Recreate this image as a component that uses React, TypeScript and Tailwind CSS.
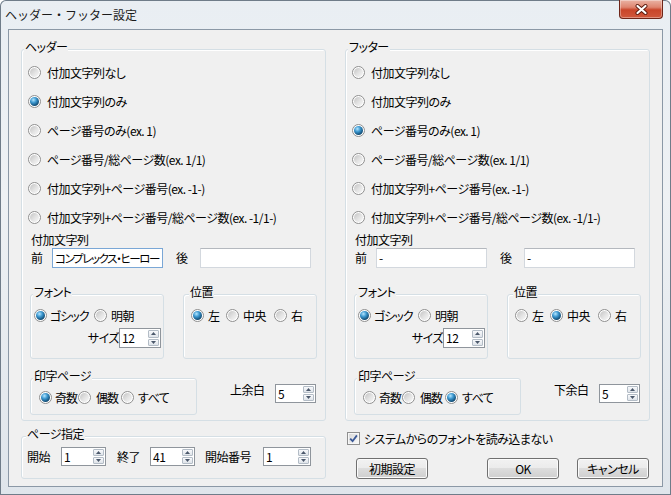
import type { ReactNode } from "react";

const OPTIONS = [
  "付加文字列なし",
  "付加文字列のみ",
  "ページ番号のみ(ex. 1)",
  "ページ番号/総ページ数(ex. 1/1)",
  "付加文字列+ページ番号(ex. -1-)",
  "付加文字列+ページ番号/総ページ数(ex. -1/1-)",
];

function Radio({ checked = false }: { checked?: boolean }) {
  return (
    <span className="flex h-[13px] w-[13px] shrink-0 items-center justify-center rounded-full border border-[#8f8f8f] bg-white">
      <span
        className={
          checked
            ? "h-[9px] w-[9px] rounded-full bg-[radial-gradient(circle_at_38%_32%,#b4e6ff_0%,#3b97cf_35%,#124c74_72%,#0a2c45_100%)]"
            : "h-[9px] w-[9px] rounded-full bg-[linear-gradient(135deg,#c4c4c4_0%,#e4e4e4_55%,#f8f8f8_100%)]"
        }
      />
    </span>
  );
}

function Group({
  label,
  labelClass,
  className,
  children,
}: {
  label: string;
  labelClass: string;
  className: string;
  children: ReactNode;
}) {
  return (
    <div className={"flex shrink-0 flex-col rounded-[3px] border border-[#d5dfe5] shadow-[inset_1px_1px_0_#ffffff] " + className}>
      <div className={"-mt-[10px] w-fit bg-[#f0f0f0] px-[1px] leading-[14px] " + labelClass}>{label}</div>
      {children}
    </div>
  );
}

function Arrow({ up }: { up?: boolean }) {
  return (
    <svg width="5" height="3" viewBox="0 0 5 3">
      <path d={up ? "M0 3 L2.5 0 L5 3 Z" : "M0 0 L5 0 L2.5 3 Z"} fill="#4b586b" />
    </svg>
  );
}

function Spin({ value, className }: { value: string; className: string }) {
  return (
    <div className={"flex shrink-0 border border-[#8f959c] bg-white " + className}>
      <span className="flex flex-1 items-center pl-[2px]">{value}</span>
      <span className="flex w-[12px] flex-col gap-[1px] py-[1px] pr-[1px]">
        <span className="flex flex-1 items-center justify-center rounded-[1px] border border-[#b3bcc6] bg-[linear-gradient(to_bottom,#f8f9fb,#dfe4ea)]">
          <Arrow up />
        </span>
        <span className="flex flex-1 items-center justify-center rounded-[1px] border border-[#b3bcc6] bg-[linear-gradient(to_bottom,#f8f9fb,#dfe4ea)]">
          <Arrow />
        </span>
      </span>
    </div>
  );
}

function TextBox({ value, focused, className }: { value: string; focused?: boolean; className: string }) {
  return (
    <div
      className={
        (focused
          ? "border-[#7aa7d6] text-[11.5px] tracking-[-1.4px] "
          : "border-[#d3d8de] border-t-[#b4b8be] ") +
        "flex h-[20px] w-[111px] shrink-0 items-center overflow-hidden border bg-white pl-[2px] " +
        className
      }
    >
      {value}
    </div>
  );
}

function Choice({ checked, label, className }: { checked?: boolean; label: string; className: string }) {
  return (
    <div className={"flex shrink-0 items-center " + className}>
      <Radio checked={checked} />
      <span className="shrink-0">{label}</span>
    </div>
  );
}

function Section({
  title,
  selected,
  before,
  after,
  beforeFocused,
  pos,
  print,
  marginLabel,
}: {
  title: string;
  selected: number;
  before: string;
  after: string;
  beforeFocused?: boolean;
  pos: number;
  print: number;
  marginLabel: string;
}) {
  return (
    <Group label={title} labelClass="ml-[2px]" className="h-[372px]">
      <div className="mt-[4px] flex flex-col pl-[6px]">
        {OPTIONS.map((o, i) => (
          <div key={o} className="flex h-[29px] items-center gap-[6px]">
            <Radio checked={i === selected} />
            <span>{o}</span>
          </div>
        ))}
      </div>
      <div className="mt-[1px] pl-[9px] leading-[14px]">付加文字列</div>
      <div className="mt-[1px] flex h-[20px] items-center pl-[9px]">
        <span className="w-[12px] shrink-0">前</span>
        <TextBox value={before} focused={beforeFocused} className="ml-[9px]" />
        <span className="ml-[13px] w-[12px] shrink-0">後</span>
        <TextBox value={after} className="ml-[12px]" />
      </div>
      <div className="mt-[26px] flex pl-[8px]">
        <Group label="フォント" labelClass="ml-[2px]" className="h-[65px] w-[134px]">
          <div className="mt-[10px] flex h-[13px] items-center pl-[3px]">
            <Choice checked label="ゴシック" className="w-[60px] gap-[3px] tracking-[-1px]" />
            <Choice label="明朝" className="gap-[4px]" />
          </div>
          <div className="mt-[6px] flex items-center justify-end pr-[2px]">
            <span>サイズ</span>
            <Spin value="12" className="h-[20px] w-[42px]" />
          </div>
        </Group>
        <Group label="位置" labelClass="ml-[5px]" className="ml-[19px] h-[65px] w-[134px]">
          <div className="mt-[10px] flex h-[13px] items-center pl-[7px]">
            <Choice checked={pos === 0} label="左" className="w-[35px] gap-[4px]" />
            <Choice checked={pos === 1} label="中央" className="w-[48px] gap-[4px]" />
            <Choice checked={pos === 2} label="右" className="gap-[4px]" />
          </div>
        </Group>
      </div>
      <div className="mt-[19px] flex pl-[8px]">
        <Group label="印字ページ" labelClass="ml-[2px]" className="h-[37px] w-[167px]">
          <div className="mt-[8px] flex h-[13px] items-center pl-[8px]">
            <Choice checked={print === 0} label="奇数" className="w-[39px] gap-[3px] tracking-[-1px]" />
            <Choice checked={print === 1} label="偶数" className="w-[43px] gap-[5px] tracking-[-1px]" />
            <Choice checked={print === 2} label="すべて" className="gap-[4px]" />
          </div>
        </Group>
        <div className="ml-[33px] mt-[6px] flex h-[19px] items-start">
          <span className="-mt-[1px] w-[36px] leading-[14px]">{marginLabel}</span>
          <Spin value="5" className="ml-[9px] h-[19px] w-[41px]" />
        </div>
      </div>
    </Group>
  );
}

function WinButton({ label, className }: { label: string; className: string }) {
  return (
    <button
      type="button"
      className={
        "flex h-[21px] w-[72px] shrink-0 items-center justify-center rounded-[3px] border border-[#707070] bg-[linear-gradient(to_bottom,#f2f2f2_0%,#ebebeb_49%,#dddddd_50%,#cfcfcf_100%)] shadow-[inset_0_0_0_1px_#fbfbfb] " +
        className
      }
    >
      {label}
    </button>
  );
}

export default function App() {
  return (
    <div className="flex h-[495px] w-[671px] flex-col overflow-hidden whitespace-nowrap rounded-t-[6px] bg-[linear-gradient(to_bottom,#e9eef3_0%,#eef1f4_40%,#dfe5eb_100%)] font-['Noto_Sans_CJK_JP',sans-serif] text-[12px] leading-[14px] text-black shadow-[inset_0_0_0_1px_#6f7c89]">
      {/* title bar */}
      <div className="flex h-[29px] shrink-0 items-start">
        <span className="ml-[5px] mt-[7px] leading-[16px] text-[#1b1b1b]">ヘッダー・フッター設定</span>
        <div className="ml-auto mr-[8px] flex h-[19px] w-[44px] items-center justify-center rounded-b-[4px] border border-t-0 border-[#6e2518] bg-[linear-gradient(to_bottom,#eab3a4_0%,#de8570_40%,#c9452a_55%,#d0583c_100%)] shadow-[inset_0_0_0_1px_rgba(255,255,255,0.35)]">
          <svg width="13" height="11" viewBox="0 0 13 11">
            <path d="M2.5 2 L10.5 9 M10.5 2 L2.5 9" stroke="#5a1a0e" strokeWidth="4" strokeLinecap="round" />
            <path d="M2.5 2 L10.5 9 M10.5 2 L2.5 9" stroke="#ffffff" strokeWidth="2.2" strokeLinecap="round" />
          </svg>
        </div>
      </div>

      {/* client area */}
      <div className="mx-[8px] flex h-[458px] shrink-0 border border-[#8b98a6] bg-[#f0f0f0] tracking-[-0.5px] [font-feature-settings:'palt']">
        <div className="ml-[12px] mt-[19px] flex w-[305px] shrink-0 flex-col">
          <Section
            title="ヘッダー"
            selected={1}
            before="コンプレックス・ヒーロー"
            after=""
            beforeFocused
            pos={0}
            print={0}
            marginLabel="上余白"
          />
          <Group label="ページ指定" labelClass="ml-[4px]" className="mt-[15px] h-[43px]">
            <div className="mt-[6px] flex h-[19px] items-center pl-[5px]">
              <span className="w-[24px] shrink-0">開始</span>
              <Spin value="1" className="ml-[10px] h-[19px] w-[45px]" />
              <span className="ml-[11px] w-[24px] shrink-0">終了</span>
              <Spin value="41" className="ml-[9px] h-[19px] w-[45px]" />
              <span className="ml-[10px] w-[48px] shrink-0">開始番号</span>
              <Spin value="1" className="ml-[10px] h-[19px] w-[48px]" />
            </div>
          </Group>
        </div>

        <div className="ml-[19px] mt-[19px] flex w-[305px] shrink-0 flex-col">
          <Section
            title="フッター"
            selected={2}
            before="-"
            after="-"
            pos={1}
            print={2}
            marginLabel="下余白"
          />
          <div className="mt-[11px] flex h-[13px] items-center gap-[4px] pl-[2px]">
            <span className="flex h-[13px] w-[13px] items-center justify-center border border-[#8f8f8f] bg-[linear-gradient(135deg,#d6d6d6,#fbfbfb)] shadow-[inset_0_0_0_1px_#f6f6f6]">
              <svg width="9" height="9" viewBox="0 0 9 9">
                <path d="M1.2 4.6 L3.6 7.2 L7.9 1.4" fill="none" stroke="#3a5896" strokeWidth="1.8" />
              </svg>
            </span>
            <span>システムからのフォントを読み込まない</span>
          </div>
          <div className="mt-[13px] flex pl-[11px]">
            <WinButton label="初期設定" className="" />
            <WinButton label="OK" className="ml-[59px]" />
            <WinButton label="キャンセル" className="ml-[18px]" />
          </div>
        </div>
      </div>
    </div>
  );
}
